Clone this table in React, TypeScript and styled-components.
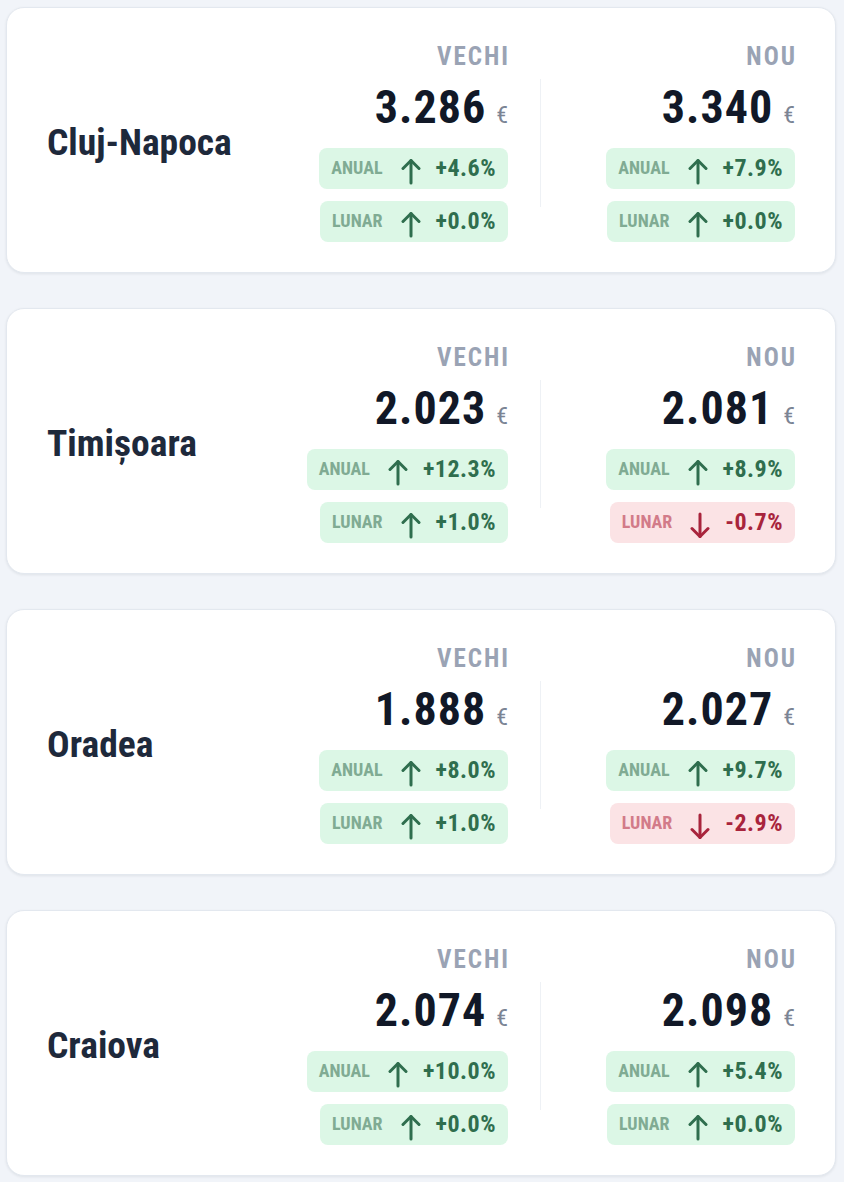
import React from "react";
import styled, { createGlobalStyle } from "styled-components";

const Global = createGlobalStyle`
  html, body { margin: 0; padding: 0; background: #f1f4f9; }
  body { font-family: "Roboto Condensed", "Roboto", "Liberation Sans", sans-serif; }
  * { box-sizing: border-box; }
`;

const Page = styled.div`
  display: flex;
  flex-direction: column;
  gap: 35px;
  padding: 7px 8px 7px 6px;
`;

const Card = styled.section`
  display: flex;
  align-items: center;
  justify-content: space-between;
  background: #ffffff;
  border: 1px solid #e3e8ef;
  border-radius: 18px;
  box-shadow: 0 1px 3px rgba(15, 23, 42, 0.08);
  padding: 36px 40px 30.5px 40px;
`;

const City = styled.h2`
  margin: 0;
  font-size: 37.5px;
  font-weight: 700;
  color: #1e293b;
  line-height: 1;
`;

const Columns = styled.div`
  display: flex;
  align-items: stretch;
  gap: 32px;
`;

const Divider = styled.div`
  width: 1px;
  height: 128px;
  align-self: center;
  background: #eef1f5;
`;

const Column = styled.div`
  width: 222px;
  display: flex;
  flex-direction: column;
  align-items: flex-end;
`;

const Label = styled.div`
  font-size: 25px;
  line-height: 1;
  font-weight: 700;
  letter-spacing: 2px;
  margin-right: -2px;
  color: #9aa3b4;
`;

const PriceRow = styled.div`
  display: flex;
  align-items: baseline;
  gap: 10px;
  margin-top: 15px;
`;

const Price = styled.span`
  font-size: 46px;
  line-height: 1;
  font-weight: 700;
  color: #111827;
  letter-spacing: 1px;
`;

const Euro = styled.span`
  font-size: 24px;
  line-height: 1;
  font-weight: 400;
  color: #7b8494;
`;

const Pills = styled.div`
  display: flex;
  flex-direction: column;
  align-items: flex-end;
  gap: 12.5px;
  margin-top: 18px;
`;

const Pill = styled.div<{ $down?: boolean }>`
  display: inline-flex;
  align-items: center;
  height: 40.5px;
  padding: 0 12px;
  border-radius: 8px;
  background: ${(p) => (p.$down ? "#fbe3e5" : "#dcf7e6")};
  color: ${(p) => (p.$down ? "#a8243c" : "#2f6e4e")};
`;

const PillLabel = styled.span<{ $down?: boolean }>`
  font-size: 18px;
  font-weight: 700;
  line-height: 1;
  color: ${(p) => (p.$down ? "#d27b89" : "#80ab93")};
  margin-right: 18px;
`;

const PillValue = styled.span`
  font-size: 24px;
  font-weight: 700;
  line-height: 1;
  letter-spacing: 0.5px;
  margin-left: 15px;
`;

const ArrowSvg = styled.svg`
  display: block;
  margin-top: 6px;
`;

const Arrow = ({ down }: { down?: boolean }) => (
  <ArrowSvg width="20" height="27" viewBox="0 0 20 27" fill="none" stroke="currentColor" strokeWidth="3" strokeLinecap="round" strokeLinejoin="round">
    {down ? (
      <>
        <path d="M10 2v22.5" />
        <path d="M2 16.5l8 8 8-8" />
      </>
    ) : (
      <>
        <path d="M10 25V2.5" />
        <path d="M2 10.5l8-8 8 8" />
      </>
    )}
  </ArrowSvg>
);

type Stat = { label: string; value: string };
type Side = { price: string; stats: Stat[] };
type Row = { city: string; old: Side; neu: Side };

const rows: Row[] = [
  {
    city: "Cluj-Napoca",
    old: { price: "3.286", stats: [{ label: "ANUAL", value: "+4.6%" }, { label: "LUNAR", value: "+0.0%" }] },
    neu: { price: "3.340", stats: [{ label: "ANUAL", value: "+7.9%" }, { label: "LUNAR", value: "+0.0%" }] },
  },
  {
    city: "Timișoara",
    old: { price: "2.023", stats: [{ label: "ANUAL", value: "+12.3%" }, { label: "LUNAR", value: "+1.0%" }] },
    neu: { price: "2.081", stats: [{ label: "ANUAL", value: "+8.9%" }, { label: "LUNAR", value: "-0.7%" }] },
  },
  {
    city: "Oradea",
    old: { price: "1.888", stats: [{ label: "ANUAL", value: "+8.0%" }, { label: "LUNAR", value: "+1.0%" }] },
    neu: { price: "2.027", stats: [{ label: "ANUAL", value: "+9.7%" }, { label: "LUNAR", value: "-2.9%" }] },
  },
  {
    city: "Craiova",
    old: { price: "2.074", stats: [{ label: "ANUAL", value: "+10.0%" }, { label: "LUNAR", value: "+0.0%" }] },
    neu: { price: "2.098", stats: [{ label: "ANUAL", value: "+5.4%" }, { label: "LUNAR", value: "+0.0%" }] },
  },
];

const SideColumn = ({ title, side }: { title: string; side: Side }) => (
  <Column>
    <Label>{title}</Label>
    <PriceRow>
      <Price>{side.price}</Price>
      <Euro>€</Euro>
    </PriceRow>
    <Pills>
      {side.stats.map((s) => {
        const down = s.value.startsWith("-");
        return (
          <Pill key={s.label} $down={down}>
            <PillLabel $down={down}>{s.label}</PillLabel>
            <Arrow down={down} />
            <PillValue>{s.value}</PillValue>
          </Pill>
        );
      })}
    </Pills>
  </Column>
);

export default function App() {
  return (
    <>
      <Global />
      <Page>
        {rows.map((r) => (
          <Card key={r.city}>
            <City>{r.city}</City>
            <Columns>
              <SideColumn title="VECHI" side={r.old} />
              <Divider />
              <SideColumn title="NOU" side={r.neu} />
            </Columns>
          </Card>
        ))}
      </Page>
    </>
  );
}
